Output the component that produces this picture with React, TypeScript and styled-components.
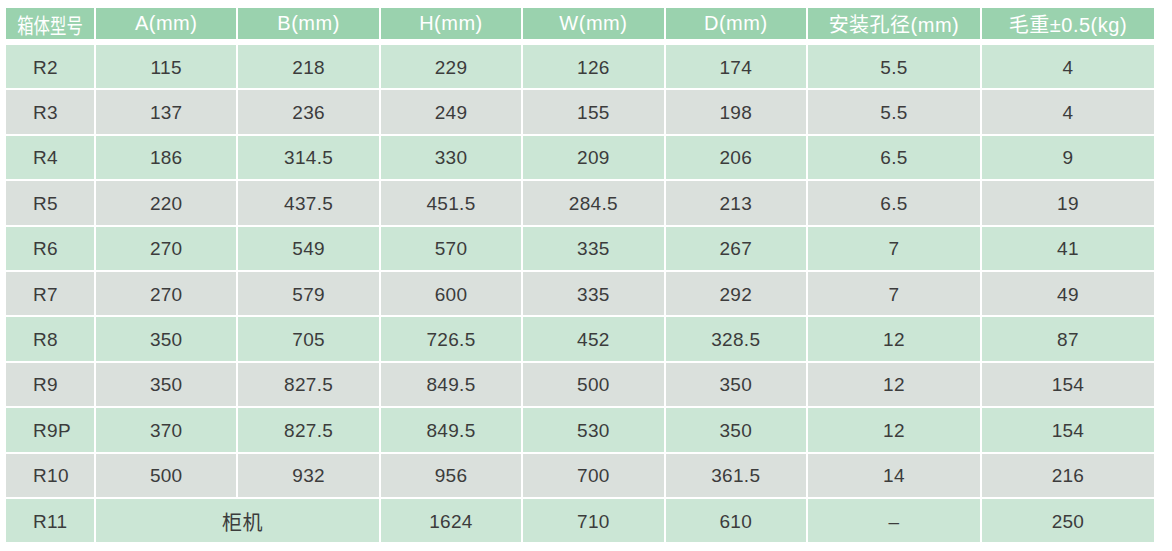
import React from "react";
import styled, { createGlobalStyle } from "styled-components";

const GlobalStyle = createGlobalStyle`
  html, body { margin: 0; padding: 0; background: #ffffff; }
  body { font-family: "Liberation Sans", "Noto Sans CJK SC", sans-serif; }
`;

const Page = styled.div`
  padding: 8px 0 0 6px;
  width: 1172px;
  height: 551px;
  box-sizing: border-box;
  background: #ffffff;
`;

const Table = styled.div`
  display: grid;
  grid-template-columns: 88px repeat(5, 140.4px) 172px 172px;
  grid-template-rows: 35px repeat(11, 43.4px);
  column-gap: 2px;
  row-gap: 2px;
`;

const HeaderCell = styled.div`
  background: #9ad2ae;
  color: #ffffff;
  font-family: "Liberation Sans", "Noto Sans CJK SC", sans-serif;
  font-size: 20px;
  letter-spacing: 0.5px;
  display: flex;
  align-items: center;
  justify-content: center;
  white-space: nowrap;
  margin-bottom: 4.3px;
  padding-top: 1px;
`;

const Squeezed = styled.span`
  display: inline-block;
  font-size: 21px;
  letter-spacing: 0;
  transform: scaleX(0.78);
`;

const Cell = styled.div<{ $tone: "green" | "grey"; $left?: boolean; $span?: number; $shift?: number }>`
  background: ${(p) => (p.$tone === "green" ? "#cbe6d5" : "#dae0dc")};
  color: #3c3c3c;
  font-family: "Liberation Sans", "Noto Sans CJK SC", sans-serif;
  font-size: 19px;
  letter-spacing: 0.3px;
  display: flex;
  align-items: center;
  justify-content: ${(p) => (p.$left ? "flex-start" : "center")};
  padding-left: ${(p) => (p.$left ? "27px" : p.$shift ? `${p.$shift}px` : "0")};
  padding-top: 2px;
  grid-column: ${(p) => (p.$span ? `span ${p.$span}` : "auto")};
  white-space: nowrap;
`;

const CjkText = styled.span`
  font-size: 20px;
`;

const headers = [
  "A(mm)",
  "B(mm)",
  "H(mm)",
  "W(mm)",
  "D(mm)",
  "安装孔径(mm)",
  "毛重±0.5(kg)",
];

const rows: string[][] = [
  ["R2", "115", "218", "229", "126", "174", "5.5", "4"],
  ["R3", "137", "236", "249", "155", "198", "5.5", "4"],
  ["R4", "186", "314.5", "330", "209", "206", "6.5", "9"],
  ["R5", "220", "437.5", "451.5", "284.5", "213", "6.5", "19"],
  ["R6", "270", "549", "570", "335", "267", "7", "41"],
  ["R7", "270", "579", "600", "335", "292", "7", "49"],
  ["R8", "350", "705", "726.5", "452", "328.5", "12", "87"],
  ["R9", "350", "827.5", "849.5", "500", "350", "12", "154"],
  ["R9P", "370", "827.5", "849.5", "530", "350", "12", "154"],
  ["R10", "500", "932", "956", "700", "361.5", "14", "216"],
];

const Row = styled.div`
  display: contents;
`;

export default function App() {
  return (
    <>
      <GlobalStyle />
      <Page>
        <Table>
          <Row>
            <HeaderCell>
              <Squeezed>箱体型号</Squeezed>
            </HeaderCell>
            {headers.map((h) => (
              <HeaderCell key={h}>{h}</HeaderCell>
            ))}
          </Row>
          {rows.map((r, i) => {
            const tone = i % 2 === 0 ? "green" : "grey";
            return (
              <Row key={r[0]}>
                {r.map((v, j) => (
                  <Cell key={j} $tone={tone} $left={j === 0}>
                    {v}
                  </Cell>
                ))}
              </Row>
            );
          })}
          <Row>
            <Cell $tone="green" $left>
              R11
            </Cell>
            <Cell $tone="green" $span={2} $shift={10}>
              <CjkText>柜机</CjkText>
            </Cell>
            <Cell $tone="green">1624</Cell>
            <Cell $tone="green">710</Cell>
            <Cell $tone="green">610</Cell>
            <Cell $tone="green">–</Cell>
            <Cell $tone="green">250</Cell>
          </Row>
        </Table>
      </Page>
    </>
  );
}
